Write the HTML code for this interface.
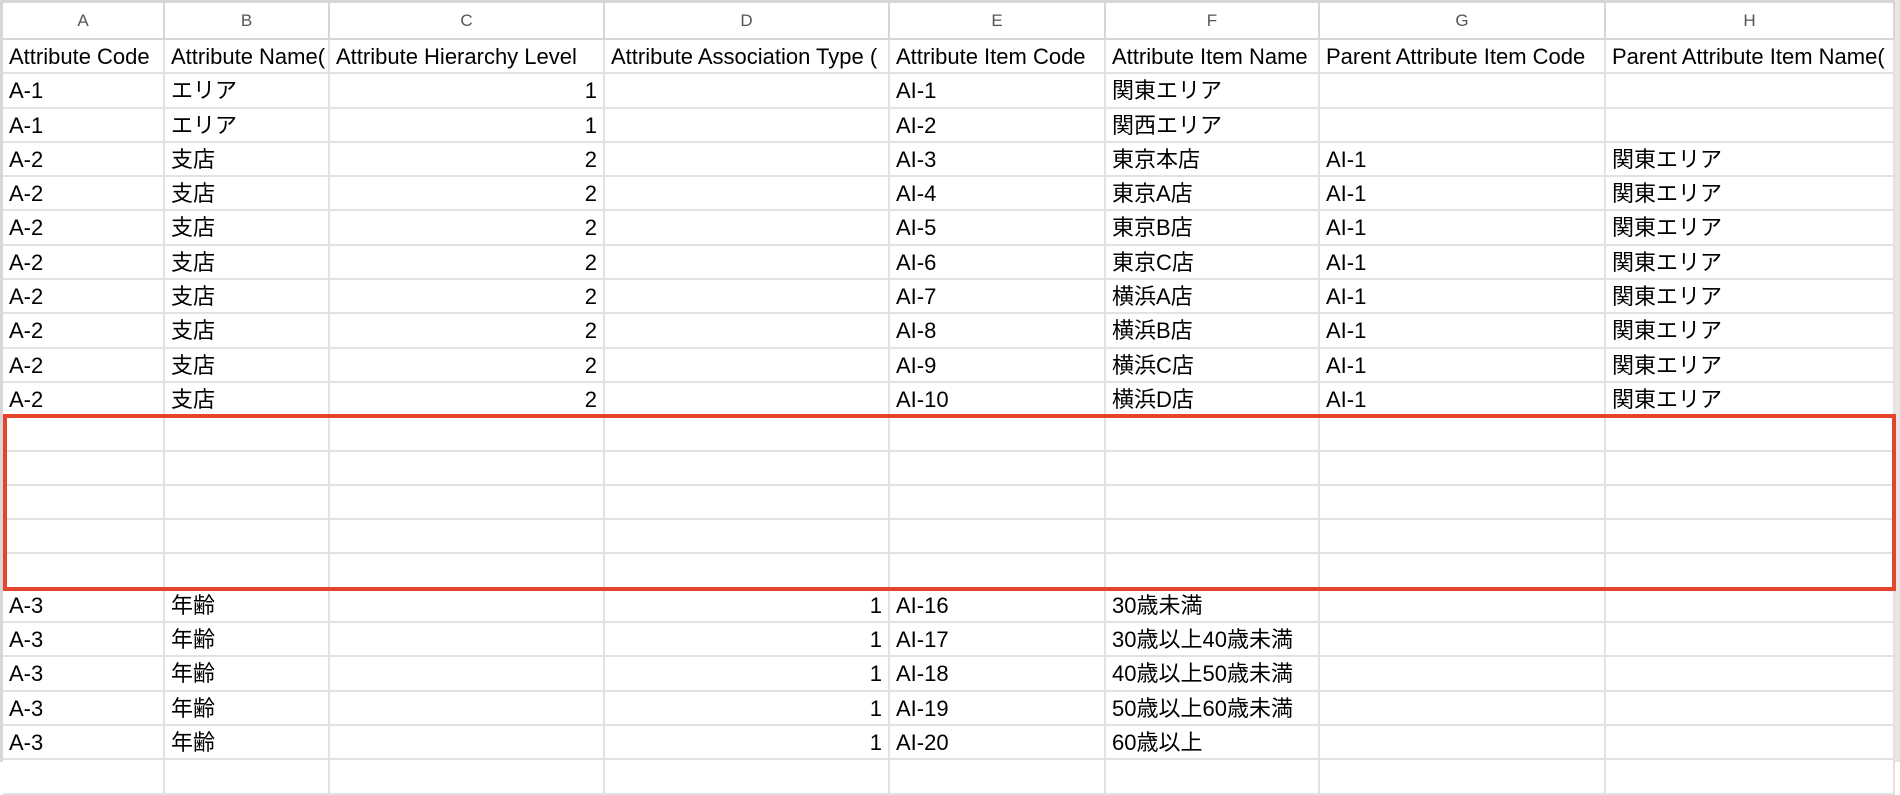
<!DOCTYPE html>
<html><head><meta charset="utf-8"><style>
*{margin:0;padding:0;box-sizing:border-box}
body{width:1900px;height:762px;overflow:hidden;background:#fff;position:relative;font-family:"Liberation Sans","Noto Sans CJK JP",sans-serif;color:#000}
.strip{position:absolute;background:#d6d6d6}
.grid{position:absolute;left:3px;top:3px}
.r{display:flex;height:34.3px}
.r.h{height:37px}
.c{flex:none;height:100%;border-right:2px solid #e2e2e2;border-bottom:2px solid #e2e2e2;font-size:22px;line-height:33px;padding:0 6px;white-space:nowrap;overflow:hidden}
.h .c{font-size:17px;color:#555;text-align:center;line-height:36px;border-bottom-color:#d6d6d6;border-right-color:#d6d6d6}
.n{text-align:right}
.w1{width:162px}.w2{width:165px}.w3{width:275px}.w4{width:285px}.w5{width:216px}.w6{width:214px}.w7{width:286px}.w8{width:289px}
.box{position:absolute;left:3px;top:414px;width:1893px;height:177px;border:4px solid #e5452c}
</style></head><body>
<div class="strip" style="left:0;top:0;width:1900px;height:3px"></div>
<div class="strip" style="left:0;top:0;width:3px;height:762px"></div>
<div class="strip" style="left:1895px;top:0;width:5px;height:762px;background:#e6e6e6"></div>
<div class="grid">
<div class="r h"><div class="c w1">A</div><div class="c w2">B</div><div class="c w3">C</div><div class="c w4">D</div><div class="c w5">E</div><div class="c w6">F</div><div class="c w7">G</div><div class="c w8">H</div></div>
<div class="r"><div class="c w1">Attribute Code</div><div class="c w2">Attribute Name(</div><div class="c w3">Attribute Hierarchy Level</div><div class="c w4">Attribute Association Type (</div><div class="c w5">Attribute Item Code</div><div class="c w6">Attribute Item Name</div><div class="c w7">Parent Attribute Item Code</div><div class="c w8">Parent Attribute Item Name(</div></div>
<div class="r"><div class="c w1">A-1</div><div class="c w2">エリア</div><div class="c w3 n">1</div><div class="c w4"></div><div class="c w5">AI-1</div><div class="c w6">関東エリア</div><div class="c w7"></div><div class="c w8"></div></div>
<div class="r"><div class="c w1">A-1</div><div class="c w2">エリア</div><div class="c w3 n">1</div><div class="c w4"></div><div class="c w5">AI-2</div><div class="c w6">関西エリア</div><div class="c w7"></div><div class="c w8"></div></div>
<div class="r"><div class="c w1">A-2</div><div class="c w2">支店</div><div class="c w3 n">2</div><div class="c w4"></div><div class="c w5">AI-3</div><div class="c w6">東京本店</div><div class="c w7">AI-1</div><div class="c w8">関東エリア</div></div>
<div class="r"><div class="c w1">A-2</div><div class="c w2">支店</div><div class="c w3 n">2</div><div class="c w4"></div><div class="c w5">AI-4</div><div class="c w6">東京A店</div><div class="c w7">AI-1</div><div class="c w8">関東エリア</div></div>
<div class="r"><div class="c w1">A-2</div><div class="c w2">支店</div><div class="c w3 n">2</div><div class="c w4"></div><div class="c w5">AI-5</div><div class="c w6">東京B店</div><div class="c w7">AI-1</div><div class="c w8">関東エリア</div></div>
<div class="r"><div class="c w1">A-2</div><div class="c w2">支店</div><div class="c w3 n">2</div><div class="c w4"></div><div class="c w5">AI-6</div><div class="c w6">東京C店</div><div class="c w7">AI-1</div><div class="c w8">関東エリア</div></div>
<div class="r"><div class="c w1">A-2</div><div class="c w2">支店</div><div class="c w3 n">2</div><div class="c w4"></div><div class="c w5">AI-7</div><div class="c w6">横浜A店</div><div class="c w7">AI-1</div><div class="c w8">関東エリア</div></div>
<div class="r"><div class="c w1">A-2</div><div class="c w2">支店</div><div class="c w3 n">2</div><div class="c w4"></div><div class="c w5">AI-8</div><div class="c w6">横浜B店</div><div class="c w7">AI-1</div><div class="c w8">関東エリア</div></div>
<div class="r"><div class="c w1">A-2</div><div class="c w2">支店</div><div class="c w3 n">2</div><div class="c w4"></div><div class="c w5">AI-9</div><div class="c w6">横浜C店</div><div class="c w7">AI-1</div><div class="c w8">関東エリア</div></div>
<div class="r"><div class="c w1">A-2</div><div class="c w2">支店</div><div class="c w3 n">2</div><div class="c w4"></div><div class="c w5">AI-10</div><div class="c w6">横浜D店</div><div class="c w7">AI-1</div><div class="c w8">関東エリア</div></div>
<div class="r"><div class="c w1"></div><div class="c w2"></div><div class="c w3"></div><div class="c w4"></div><div class="c w5"></div><div class="c w6"></div><div class="c w7"></div><div class="c w8"></div></div>
<div class="r"><div class="c w1"></div><div class="c w2"></div><div class="c w3"></div><div class="c w4"></div><div class="c w5"></div><div class="c w6"></div><div class="c w7"></div><div class="c w8"></div></div>
<div class="r"><div class="c w1"></div><div class="c w2"></div><div class="c w3"></div><div class="c w4"></div><div class="c w5"></div><div class="c w6"></div><div class="c w7"></div><div class="c w8"></div></div>
<div class="r"><div class="c w1"></div><div class="c w2"></div><div class="c w3"></div><div class="c w4"></div><div class="c w5"></div><div class="c w6"></div><div class="c w7"></div><div class="c w8"></div></div>
<div class="r"><div class="c w1"></div><div class="c w2"></div><div class="c w3"></div><div class="c w4"></div><div class="c w5"></div><div class="c w6"></div><div class="c w7"></div><div class="c w8"></div></div>
<div class="r"><div class="c w1">A-3</div><div class="c w2">年齢</div><div class="c w3"></div><div class="c w4 n">1</div><div class="c w5">AI-16</div><div class="c w6">30歳未満</div><div class="c w7"></div><div class="c w8"></div></div>
<div class="r"><div class="c w1">A-3</div><div class="c w2">年齢</div><div class="c w3"></div><div class="c w4 n">1</div><div class="c w5">AI-17</div><div class="c w6">30歳以上40歳未満</div><div class="c w7"></div><div class="c w8"></div></div>
<div class="r"><div class="c w1">A-3</div><div class="c w2">年齢</div><div class="c w3"></div><div class="c w4 n">1</div><div class="c w5">AI-18</div><div class="c w6">40歳以上50歳未満</div><div class="c w7"></div><div class="c w8"></div></div>
<div class="r"><div class="c w1">A-3</div><div class="c w2">年齢</div><div class="c w3"></div><div class="c w4 n">1</div><div class="c w5">AI-19</div><div class="c w6">50歳以上60歳未満</div><div class="c w7"></div><div class="c w8"></div></div>
<div class="r"><div class="c w1">A-3</div><div class="c w2">年齢</div><div class="c w3"></div><div class="c w4 n">1</div><div class="c w5">AI-20</div><div class="c w6">60歳以上</div><div class="c w7"></div><div class="c w8"></div></div>
<div class="r"><div class="c w1"></div><div class="c w2"></div><div class="c w3"></div><div class="c w4"></div><div class="c w5"></div><div class="c w6"></div><div class="c w7"></div><div class="c w8"></div></div>
</div>
<div class="box"></div>
</body></html>
